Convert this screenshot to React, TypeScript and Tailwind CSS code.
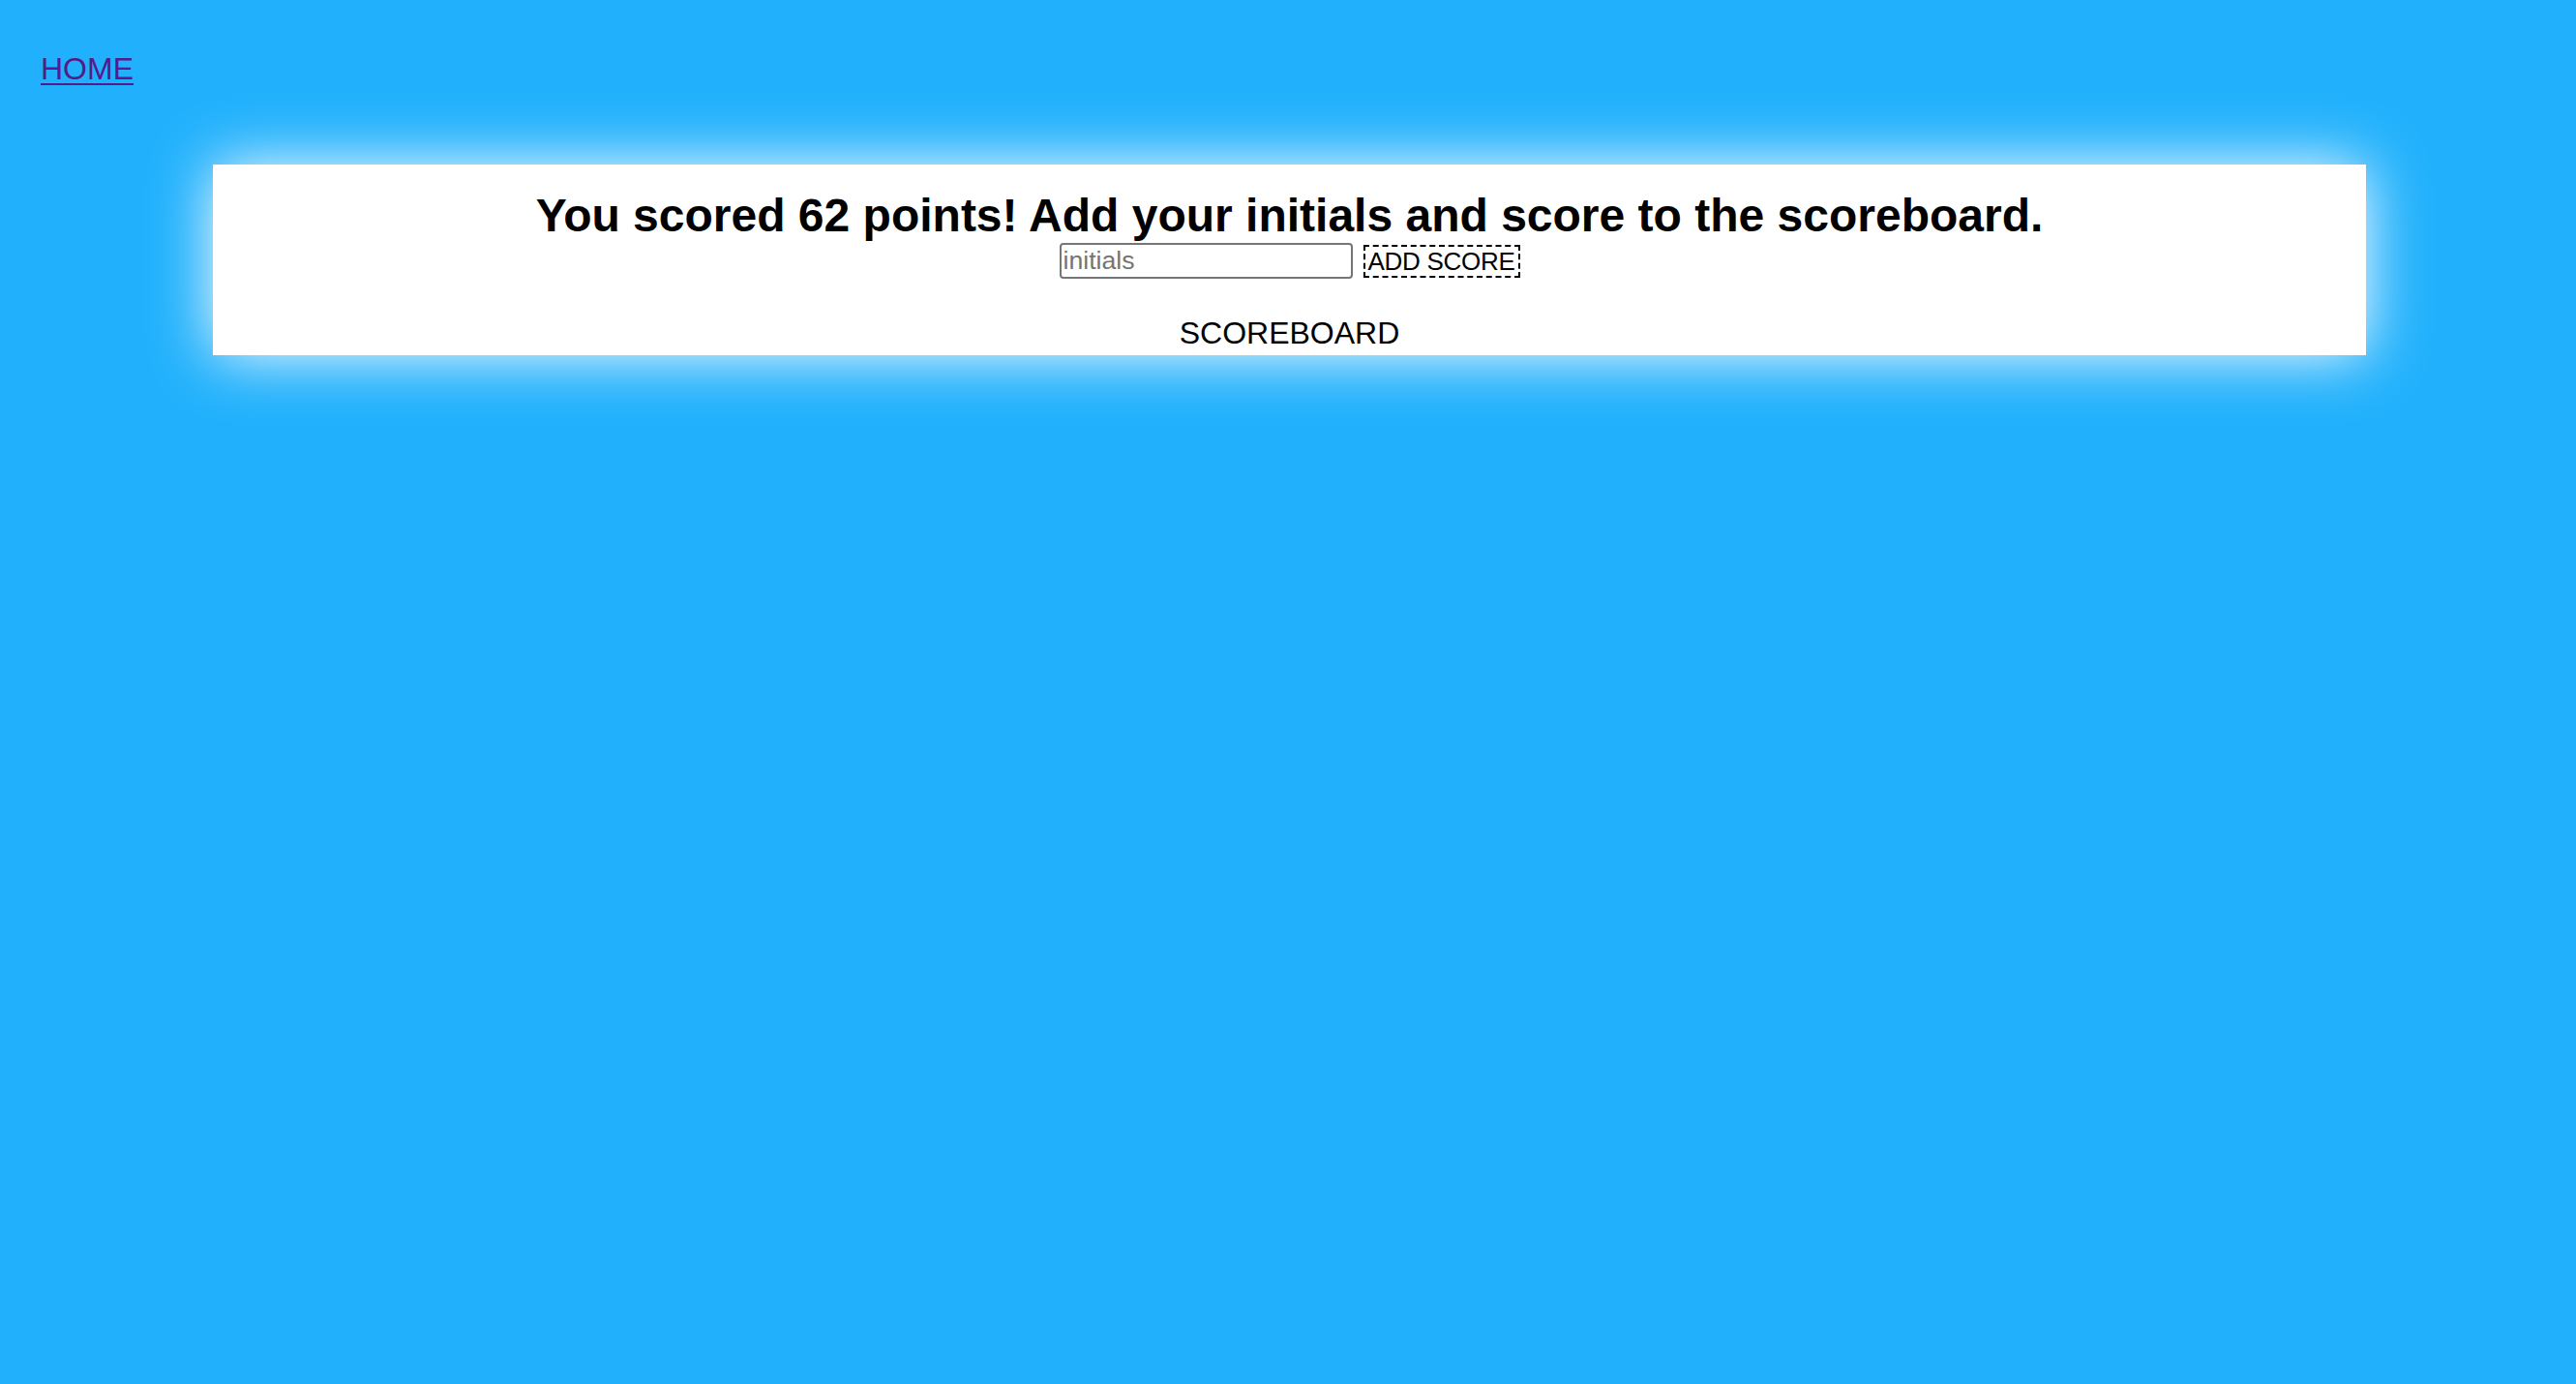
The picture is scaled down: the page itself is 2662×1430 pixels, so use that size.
import React from 'react';

export default function App() {
  return (
    <div
      className="min-h-screen w-full bg-[#21b1fc] pt-[53px] pb-10"
      style={{ fontFamily: '"Liberation Sans", Arial, Helvetica, sans-serif' }}
    >
      {/* Nav */}
      <nav className="pl-[42px]">
        <a href="#" className="text-[32px] leading-[37px] text-[#551a8b] underline decoration-[2px] underline-offset-[4px]">
          HOME
        </a>
      </nav>

      {/* Score card */}
      <div className="mt-[80px] ml-[220px] mr-[217px] bg-white pt-[25px] pb-[4px] text-center text-black shadow-[0_0_60px_white]">
        <h2 className="text-[48px] font-bold leading-[55px]">
          You scored 62 points! Add your initials and score to the scoreboard.
        </h2>

        <form className="mt-[1px] flex items-center justify-center gap-[11px]" onSubmit={(e) => e.preventDefault()}>
          <input
            type="text"
            placeholder="initials"
            className="h-[37px] w-[303px] rounded-[4px] border-2 border-[#767676] bg-white px-[2px] text-[26.67px] text-black outline-none placeholder:text-[#757575]"
          />
          <button
            type="submit"
            className="h-[34px] w-[162px] whitespace-nowrap border-2 border-dashed border-black bg-transparent px-0 text-[26px] leading-none tracking-[-0.3px] text-black"
          >
            ADD SCORE
          </button>
        </form>

        <div className="mt-[38px] text-[32px] leading-[37px]">SCOREBOARD</div>
      </div>
    </div>
  );
}
